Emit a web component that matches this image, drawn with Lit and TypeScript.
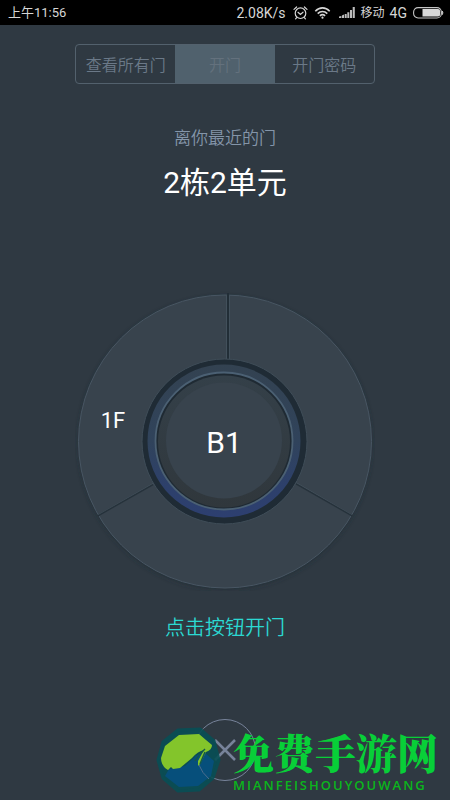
import { LitElement, html, css } from "lit";
import { customElement, state } from "lit/decorators.js";
import { classMap } from "lit/directives/class-map.js";

@customElement("status-bar")
class StatusBar extends LitElement {
  static styles = css`
    :host {
      display: flex;
      align-items: center;
      height: 25px;
      padding: 0 6px 0 8px;
      background: #000;
      color: #d6d6d6;
      font-size: 14px;
      line-height: 24px;
      white-space: nowrap;
    }
    .time { flex: 1; font-size: 13px; }
    .speed { margin-right: 7px; }
    .icon { display: block; flex: none; }
    .alarm { margin-right: 6px; }
    .wifi { margin-right: 8px; }
    .signal { margin-right: 6px; }
    .carrier { font-size: 12px; margin-right: 5px; }
    .network { margin-right: 6px; }
  `;
  render() {
    return html`
      <span class="time">上午11:56</span>
      <span class="speed">2.08K/s</span>
      <svg class="icon alarm" width="15" height="14" viewBox="0 0 15 14" fill="none" stroke="#d6d6d6" stroke-width="1.2" stroke-linecap="round">
        <circle cx="7.5" cy="7.2" r="5.3" />
        <path d="M1 3.4 3.6 1M14 3.4 11.4 1M5 6.3 7.4 8.4 10 6.2M3.6 11.6 2.6 12.8M11.4 11.6 12.4 12.8" />
      </svg>
      <svg class="icon wifi" width="17" height="12" viewBox="0 0 16 12" fill="none" stroke="#d6d6d6" stroke-width="1.6">
        <path d="M.8 4.2C5-.2 11-.2 15.2 4.2M3.2 6.6c2.8-2.8 6.8-2.8 9.6 0M5.4 8.9c1.6-1.5 3.6-1.5 5.2 0" />
        <circle cx="8" cy="10.7" r="1.1" fill="#d6d6d6" stroke="none" />
      </svg>
      <svg class="icon signal" width="16" height="11" viewBox="0 0 16 11" fill="#bdbdbd">
        <path d="M0 9.5 2.3 9v2H0zM2.9 8.5 5 7.5V11H2.9zM5.7 7h2v4h-2zM8.3 5.3h2V11h-2zM11 3h2v8h-2zM13.7 0h2.1v11h-2.1z" />
      </svg>
      <span class="carrier">移动</span>
      <span class="network">4G</span>
      <svg class="icon" width="31" height="12" viewBox="0 0 31 12">
        <rect x=".6" y=".6" width="27.8" height="10.4" rx="4.5" fill="none" stroke="#c4c4c4" stroke-width="1.1" />
        <path d="M9.5 2H25q2.2 0 2.2 2v3.6q0 2-2.2 2H9.5z" fill="#d8d8d8" />
        <path d="M29.3 4q1.2 1.8 0 3.6z" fill="#c4c4c4" stroke="#c4c4c4" />
      </svg>
    `;
  }
}

@customElement("floor-dial")
class FloorDial extends LitElement {
  static styles = css`
    :host { display: grid; position: relative; width: 300px; }
    .art { display: block; width: 100%; height: auto; }
    button {
      position: absolute;
      border: 0;
      padding: 0;
      background: none;
      color: #fff;
      font-family: inherit;
      font-weight: 400;
      cursor: pointer;
    }
    .floor {
      left: 13px;
      top: 104px;
      width: 50px;
      height: 50px;
      font-size: 22px;
    }
    .centre {
      left: 84px;
      top: 86px;
      width: 130px;
      height: 130px;
      border-radius: 50%;
      font-size: 30px;
    }
  `;
  render() {
    return html`
      <svg class="art" viewBox="0 0 300 300" aria-hidden="true">
        <defs>
          <linearGradient id="glow" x1="0" y1="0" x2="0" y2="1">
            <stop offset="0" stop-color="#334251" />
            <stop offset=".5" stop-color="#30435b" />
            <stop offset=".8" stop-color="#2d406b" />
            <stop offset="1" stop-color="#2d3f70" />
          </linearGradient>
          <linearGradient id="lip" x1="0" y1="0" x2="0" y2="1">
            <stop offset="0" stop-color="#344049" />
            <stop offset="1" stop-color="#30373c" />
          </linearGradient>
          <filter id="shade" x="-10%" y="-10%" width="120%" height="120%">
            <feGaussianBlur stdDeviation="2.5" />
          </filter>
        </defs>
        <circle cx="150" cy="152" r="146" fill="#1f2930" filter="url(#shade)" opacity=".7" />
        <circle cx="150" cy="150.5" r="146.5" fill="#38434d" stroke="#485663" />
        <g fill="none" stroke-width="1">
          <path d="M151.5 4V68M154.5 4V68M24 223.5 78 192.5M276 223.5 221 191.5" stroke="#42505b" />
          <path d="M153 2V68" stroke="#222e37" stroke-width="2" />
          <path d="M23 224.8 78 193.6M277 224.8 221 192.9" stroke="#26323b" stroke-width="1.4" />
        </g>
        <circle cx="149.5" cy="150.5" r="82.5" fill="#1f2b35" stroke="#3f4d58" />
        <circle cx="149" cy="150" r="76.5" fill="url(#glow)" />
        <circle cx="149" cy="150" r="68.5" fill="#1f2a33" stroke="#4b6073" stroke-width="1.8" />
        <circle cx="149" cy="150.5" r="66" fill="url(#lip)" />
        <circle cx="149" cy="149.5" r="58" fill="#38434d" />
      </svg>
      <button class="floor">1F</button>
      <button class="centre">B1</button>
    `;
  }
}

@customElement("site-mark")
class SiteMark extends LitElement {
  static styles = css`
    :host { display: flex; align-items: center; gap: 11px; white-space: nowrap; }
    .logo { display: block; flex: none; }
    .words { display: flex; flex-direction: column; }
    .name {
      font-family: "Noto Serif CJK SC", "Noto Sans CJK SC", serif;
      font-size: 41px;
      font-weight: 900;
      line-height: 50px;
      color: #08cf38;
    }
    .latin {
      font-family: "Open Sans", "Noto Sans", sans-serif;
      font-size: 13px;
      font-weight: 600;
      line-height: 16px;
      letter-spacing: 2px;
      color: #0bb51c;
    }
  `;
  render() {
    return html`
      <svg class="logo" width="66" height="68" viewBox="0 0 66 68" aria-hidden="true">
        <path d="M22 4 44 3 58 15 63 34 57 52 43 64 22 65 7 52 2 34 7 16z" fill="#084f55" stroke="#084f55" stroke-width="3" stroke-linejoin="round" opacity=".9" />
        <path d="M48 26 58 35 55 50 42 60 23 61 9 50 13 43 29 40 41 29z" fill="#064f7b" />
        <path d="M5 32 9 20 23 9 43 8 50 14 56 19Q56 24 50 26L44 38 42 40 42 35 48 24Q42 25 36 32L24 42 17 43 15 41 12 44Q5 40 5 32z" fill="#83c52b" />
        <path d="M49 23Q43 28 39 35M44 38 49 26" fill="none" stroke="#155849" stroke-width="1.5" />
        <path d="M43 39Q46 47 53 53" fill="none" stroke="#4c6d8d" stroke-width="1" />
      </svg>
      <div class="words">
        <span class="name">免费手游网</span>
        <span class="latin">MIANFEISHOUYOUWANG</span>
      </div>
    `;
  }
}

@customElement("app-root")
class AppRoot extends LitElement {
  static styles = css`
    :host {
      display: flex;
      flex-direction: column;
      position: relative;
      min-height: 100vh;
      box-sizing: border-box;
      background: #2f3942;
      font-family: Roboto, "Noto Sans CJK SC", sans-serif;
      overflow: hidden;
    }
    main {
      display: flex;
      flex-direction: column;
      align-items: center;
      padding: 19px 16px;
    }
    .tabs {
      display: grid;
      grid-template-columns: repeat(3, 1fr);
      width: 300px;
      height: 40px;
      box-sizing: border-box;
      border: 1px solid #53616d;
      border-radius: 4px;
      overflow: hidden;
    }
    .tab {
      border: 0;
      padding: 0;
      background: none;
      color: #6b7988;
      font-family: inherit;
      font-size: 16px;
      font-weight: 350;
      cursor: pointer;
    }
    .tab.on { background: #50616d; color: #64717d; }
    .near {
      margin: 41px 0 0;
      color: #8495a9;
      font-size: 17px;
      font-weight: 350;
      line-height: 26px;
    }
    h1 {
      margin: 12px 0 0;
      color: #fff;
      font-size: 30px;
      font-weight: 400;
      line-height: 40px;
    }
    floor-dial { margin-top: 88px; }
    .hint {
      margin: 22px 0 0;
      color: #2bd9d3;
      font-size: 20px;
      font-weight: 350;
      line-height: 30px;
    }
    .close {
      display: grid;
      place-items: center;
      width: 62px;
      height: 62px;
      margin-top: 76px;
      padding: 0;
      border: 1px solid #77839a;
      border-radius: 50%;
      background: none;
      cursor: pointer;
    }
    site-mark {
      position: absolute;
      right: 12px;
      bottom: 6px;
      pointer-events: none;
    }
  `;
  @state() private active = 1;
  private tabs = ["查看所有门", "开门", "开门密码"];
  render() {
    return html`
      <status-bar></status-bar>
      <main>
        <nav class="tabs">
          ${this.tabs.map(
            (label, i) => html`<button
              class=${classMap({ tab: true, on: i === this.active })}
              @click=${() => (this.active = i)}
            >${label}</button>`
          )}
        </nav>
        <p class="near">离你最近的门</p>
        <h1>2栋2单元</h1>
        <floor-dial></floor-dial>
        <p class="hint">点击按钮开门</p>
        <button class="close" aria-label="关闭">
          <svg width="22" height="22" viewBox="0 0 22 22" fill="none" stroke="#77839a" stroke-width="2.5">
            <path d="M1 1 21 21M21 1 1 21" />
          </svg>
        </button>
      </main>
      <site-mark></site-mark>
    `;
  }
}
